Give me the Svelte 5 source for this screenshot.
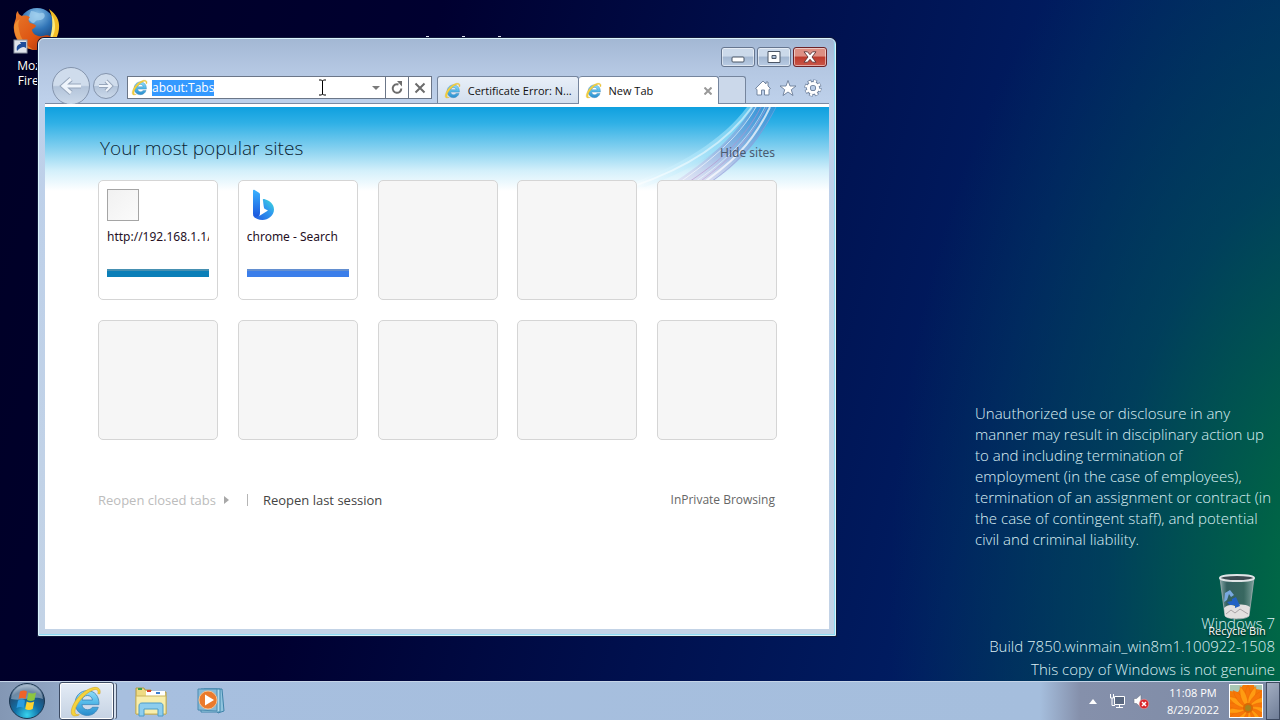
<script lang="ts">
	import { onMount } from 'svelte';

	interface Site {
		title: string;
		icon: 'blank' | 'bing';
		color: string;
	}

	const sites: (Site | null)[] = [
		{ title: 'http://192.168.1.1/', icon: 'blank', color: '#0b7fb8' },
		{ title: 'chrome - Search', icon: 'bing', color: '#3b7eea' },
		null, null, null, null, null, null, null, null,
	];

	const notice = [
		'Unauthorized use or disclosure in any',
		'manner may result in disciplinary action up',
		'to and including termination of',
		'employment (in the case of employees),',
		'termination of an assignment or contract (in',
		'the case of contingent staff), and potential',
		'civil and criminal liability.',
	];

	const petals = new Array(18).fill(0).map((_, i) => i * 20);

	let address = $state('about:Tabs');
	let addressBox: HTMLInputElement;

	onMount(() => {
		addressBox.focus();
		addressBox.select();
	});
</script>

{#snippet ie(size: number)}
	<svg width={size} height={size} viewBox="0 0 32 32" aria-hidden="true">
		<defs>
			<linearGradient id="ieBlue" x1="0" y1="0" x2="0" y2="1">
				<stop offset="0" stop-color="#8fdcf8" />
				<stop offset="0.5" stop-color="#52b8e8" />
				<stop offset="1" stop-color="#2a8ccc" />
			</linearGradient>
		</defs>
		<path
			d="M29 19H12.500C12.800 22 15 24 18 24c2 0 3.700-.8 4.700-2.400h5.700C26.700 26.500 22.800 29.500 17.800 29.500 11 29.500 6 24.500 6 17.500S11 5.500 17.800 5.500C25 5.500 29.500 11 29 19ZM12.600 14.600h10.200c-.5-2.800-2.400-4.400-5-4.400s-4.600 1.600-5.200 4.400Z"
			fill="url(#ieBlue)" stroke="#3a86bb" stroke-width="0.800" />
		<path
			d="M30 8.500C31 4 28.500 1.500 23.500 2.500 16 4 7 12 3.500 20.500 1.300 26 2 30 5.500 30c1.500 0 3-.4 4.500-1.200-3 .4-4.600-.6-4.200-4C6.500 18.500 15.500 8 23 5c3.500-1.400 6-.3 5 3.500Z"
			fill="#f6d33c" stroke="#d2a72c" stroke-width="0.600" />
	</svg>
{/snippet}

<div class="screen">
	<main class="desktop">
		<a class="shortcut firefox" href="#firefox">
			<svg width="48" height="48" viewBox="0 0 48 48" aria-hidden="true">
				<defs>
					<radialGradient id="globe" cx="0.5" cy="0.2" r="0.8">
						<stop offset="0" stop-color="#8cc4ea" />
						<stop offset="0.5" stop-color="#2f73b6" />
						<stop offset="1" stop-color="#10386f" />
					</radialGradient>
					<linearGradient id="fox" x1="0" y1="0" x2="1" y2="1">
						<stop offset="0" stop-color="#e87a2c" />
						<stop offset="0.6" stop-color="#dd5412" />
						<stop offset="1" stop-color="#a8300a" />
					</linearGradient>
				</defs>
				<circle cx="24" cy="20" r="18" fill="url(#globe)" />
				<path d="M18 5c4 0 6 3 10 2s5 4 2 6-6 0-8 3-5-1-7-3Z" fill="#a6d3f0" opacity="0.7" />
				<path d="M36 3c7 5 11 11 10 20-1 11-9 19-19 20 8-5 12-12 13-20 0-8-1-14-4-20Z" fill="#f3bd25" />
				<path d="M39 9c4 7 4 16 0 23l-4 5c4-9 5-18 4-28Z" fill="#fdea7c" />
				<path
					d="M5 5c0 3 2 4 4 5 3-1 6 0 8 1-2 2-2 4 0 6 3 1 5 1 6 3-1 2-4 3-4 4 1 5 6 7 11 6 3-1 6-1 8 1-2 7-8 13-15 13C11 44 2 35 1 24 0 18 3 14 3 11c0-3 0-4 2-6Z"
					fill="url(#fox)" />
				<path d="M1 22c1 12 9 20 20 22-9-5-14-12-15-21-1-4-1-7 1-10-4 2-6 5-6 9Z" fill="#f7a13a" opacity="0.6" />
				<rect x="1" y="34" width="13" height="13" fill="#dfe3ea" stroke="#8b93a0" stroke-width="1" />
				<path d="M4 45c-1-5 1-7 4-7l-1-2h6v6l-2-1c-3 0-4 1-7 4Z" fill="#1f4d9a" />
			</svg>
			<span>Mozilla Firefox</span>
		</a>

		<div class="peek" aria-hidden="true"><i></i><i></i><i></i></div>

		<section class="window" aria-label="New Tab">
			<header class="titlebar">
				<button class="cap" aria-label="Minimize">
					<svg width="16" height="12" viewBox="0 0 16 12"><rect x="2" y="6" width="12" height="5" rx="1" fill="#fff" stroke="#4b5666" /></svg>
				</button>
				<button class="cap" aria-label="Maximize">
					<svg width="14" height="12" viewBox="0 0 14 12"><path d="M1 .5h12v11H1ZM5 4.500v3h4v-3Z" fill="#fff" fill-rule="evenodd" stroke="#4b5666" /></svg>
				</button>
				<button class="cap close" aria-label="Close">
					<svg width="16" height="12" viewBox="0 0 16 12"><path d="M2 .8h3.500L8 3.700 10.500.8H14L10 6l4 5.200h-3.500L8 8.300l-2.500 2.900H2L6 6Z" fill="#fff" stroke="#5c3436" stroke-width="0.900" /></svg>
				</button>
			</header>

			<nav class="toolbar">
				<div class="travel">
					<button class="back" aria-label="Back">
						<svg width="24" height="20" viewBox="0 0 24 20"><path d="M12 3 4 10l8 7M4.500 10H22" fill="none" stroke="#97a6bb" stroke-width="5" /><path d="M12 3 4 10l8 7M4.500 10H22" fill="none" stroke="#eef4fb" stroke-width="3" /></svg>
					</button>
					<button class="forward" aria-label="Forward">
						<svg width="16" height="14" viewBox="0 0 16 14"><path d="m8 2 5 5-5 5M13 7H1" fill="none" stroke="#97a6bb" stroke-width="4" /><path d="m8 2 5 5-5 5M13 7H1" fill="none" stroke="#eef4fb" stroke-width="2" /></svg>
					</button>
				</div>

				<div class="address">
					{@render ie(17)}
					<input type="text" aria-label="Address" spellcheck="false" bind:value={address} bind:this={addressBox} />
					<button class="drop" aria-label="Show address history">
						<svg width="8" height="4" viewBox="0 0 8 4"><path d="M0 0h8L4 4Z" fill="#7a7a7a" /></svg>
					</button>
					<button aria-label="Refresh">
						<svg width="14" height="14" viewBox="0 0 14 14"><path d="M11.300 7.500A4.300 4.300 0 1 1 8.500 3.500" fill="none" stroke="#6c6c6c" stroke-width="2" /><path d="M7 0h5v5.500Z" fill="#6c6c6c" /></svg>
					</button>
					<button aria-label="Stop">
						<svg width="12" height="12" viewBox="0 0 12 12"><path d="m1.500 1.500 9 9m0-9-9 9" stroke="#6c6c6c" stroke-width="2" /></svg>
					</button>
				</div>

				<div class="tabs">
					<button class="tab">{@render ie(17)}<span>Certificate Error: N...</span></button>
					<div class="tab active">
						{@render ie(17)}<span>New Tab</span>
						<button aria-label="Close tab">
							<svg width="8" height="8" viewBox="0 0 8 8"><path d="m.5.5 7 7m0-7-7 7" stroke="#999" stroke-width="2" /></svg>
						</button>
					</div>
					<button class="new-tab" aria-label="New tab"></button>
				</div>

				<div class="tools">
					<button aria-label="Home">
						<svg width="18" height="18" viewBox="0 0 18 18"><path d="M9 2 1.500 9.500 3 10.500V16h4.500v-5h3v5H15v-5.500l1.500-1L14 7V3h-2v2Z" fill="#fff" stroke="#6a7d99" stroke-width="0.900" /></svg>
					</button>
					<button aria-label="Favorites">
						<svg width="18" height="18" viewBox="0 0 18 18"><path d="m9 1.500 2 5.500h6l-4.700 3.700 1.700 5.800L9 13l-5 3.500 1.700-5.800L1 7h6Z" fill="#fff" stroke="#6a7d99" stroke-width="0.900" /></svg>
					</button>
					<button aria-label="Tools">
						<svg width="18" height="18" viewBox="0 0 18 18">
							<circle cx="9" cy="9" r="6.800" fill="none" stroke="#6a7d99" stroke-width="3.600" stroke-dasharray="3.600 1.740" />
							<circle cx="9" cy="9" r="4.600" fill="none" stroke="#6a7d99" stroke-width="4.600" />
							<circle cx="9" cy="9" r="6.800" fill="none" stroke="#fff" stroke-width="2.400" stroke-dasharray="2.400 2.940" stroke-dashoffset="-0.600" />
							<circle cx="9" cy="9" r="4.600" fill="none" stroke="#fff" stroke-width="3" />
						</svg>
					</button>
				</div>
			</nav>

			<div class="page">
				<svg class="swoosh" width="220" height="84" viewBox="0 0 220 84" aria-hidden="true">
					<defs>
						<linearGradient id="ribbon" x1="1" y1="0" x2="0" y2="1">
							<stop offset="0" stop-color="#3f8fd4" stop-opacity="0.7" />
							<stop offset="0.5" stop-color="#9fa9dc" stop-opacity="0.6" />
							<stop offset="1" stop-color="#e9d9f0" stop-opacity="0.4" />
						</linearGradient>
						<linearGradient id="pale" x1="1" y1="0" x2="0" y2="1">
							<stop offset="0" stop-color="#8fdcf8" stop-opacity="0.6" />
							<stop offset="0.5" stop-color="#a9e4fa" stop-opacity="0.7" />
							<stop offset="1" stop-color="#fff" stop-opacity="0.9" />
						</linearGradient>
					</defs>
					<path d="M138 0C114 32 74 58 14 80h22C86 62 126 36 148 0Z" fill="url(#pale)" />
					<path d="M144 0C122 34 94 58 54 82h38C128 60 152 34 166 0Z" fill="url(#ribbon)" />
					<g fill="none" stroke="#fff">
						<path d="M143 0C119 34 81 60 25 79" stroke-width="2" opacity="0.5" />
						<path d="M147 0C129 32 99 56 61 82" opacity="0.600" />
						<path d="M152 0C133 36 107 58 69 82" stroke="#b88fc9" opacity="0.600" />
						<path d="M156 0C139 34 113 58 75 82" opacity="0.500" />
						<path d="M161 0C143 38 121 58 85 82" stroke-width="2" opacity="0.700" />
						<path d="M158 0C135 42 111 60 81 82" stroke="#c59bd0" opacity="0.600" />
						<path d="M167 0C151 32 127 60 91 82" stroke="#8f9fdc" opacity="0.600" />
					</g>
				</svg>

				<div class="heading">
					<h1>Your most popular sites</h1>
					<a href="#hide">Hide sites</a>
				</div>

				<div class="grid">
					{#each sites as site}
						{#if site}
							<a class="tile" href="#site">
								{#if site.icon === 'bing'}
									<svg class="favicon" width="32" height="32" viewBox="0 0 32 32" aria-hidden="true">
										<defs>
											<linearGradient id="bingStem" x1="0" y1="0" x2="0" y2="1">
												<stop offset="0" stop-color="#39b3ff" />
												<stop offset="1" stop-color="#1a53dc" />
											</linearGradient>
											<linearGradient id="bingBowl" x1="0" y1="1" x2="1" y2="0">
												<stop offset="0" stop-color="#2158e0" />
												<stop offset="0.6" stop-color="#2f9bef" />
												<stop offset="1" stop-color="#3fe0d8" />
											</linearGradient>
										</defs>
										<path d="M6 1.500c0-.8 1-1 1.600-.5L12 3.800c.8.6 1 1 1 2V24c0 3-2 5-3.500 5S6 27 6 25Z" fill="url(#bingStem)" />
										<path d="M16 11.500c-.5-1.200 0-1.900 1.200-1.500 5.500 1.500 9.800 5 9.800 10.500 0 6-6 10.500-11.500 10.500C10 31 6 28.500 6 25c1 3 4 3.500 7 1.500l8-5-3-1.500c-1-.5-1.200-1.200-2-8.500Z" fill="url(#bingBowl)" />
									</svg>
								{:else}
									<span class="favicon blank"></span>
								{/if}
								<span class="title">{site.title}</span>
								<span class="bar" style="background-color: {site.color}"></span>
							</a>
						{:else}
							<div class="tile empty"></div>
						{/if}
					{/each}
				</div>

				<footer class="links">
					<button disabled>Reopen closed tabs <svg width="5" height="8" viewBox="0 0 5 8"><path d="M0 0v8l5-4Z" fill="#a8a8a8" /></svg></button>
					<span class="sep"></span>
					<a href="#session">Reopen last session</a>
					<a class="private" href="#inprivate">InPrivate Browsing</a>
				</footer>
			</div>
		</section>

		<svg class="cursor" width="9" height="17" viewBox="0 0 9 17" aria-hidden="true">
			<path d="M1 1h2.500l1 1 1-1H8M4.500 2v13M1 16h2.500l1-1 1 1H8" fill="none" stroke="#000" />
		</svg>

		<p class="notice">
			{#each notice as line}<span>{line}</span>{/each}
		</p>

		<div class="build">
			<span>Windows 7</span>
			<span>Build 7850.winmain_win8m1.100922-1508</span>
			<span>This copy of Windows is not genuine</span>
		</div>

		<a class="shortcut bin" href="#bin">
			<svg width="38" height="48" viewBox="0 0 38 48" aria-hidden="true">
				<defs>
					<linearGradient id="glass" x1="0" y1="0" x2="1" y2="0">
						<stop offset="0" stop-color="#c4ccd2" stop-opacity="0.7" />
						<stop offset="0.2" stop-color="#59656f" stop-opacity="0.6" />
						<stop offset="0.7" stop-color="#5d6e70" stop-opacity="0.6" />
						<stop offset="1" stop-color="#b4bdc2" stop-opacity="0.7" />
					</linearGradient>
				</defs>
				<path d="M2 5 7 43c3 4 21 4 24 0l5-38Z" fill="url(#glass)" stroke="#a4adb3" stroke-width="0.800" />
				<path d="M6 35c3-3 7-4 11-2 4-2 10-2 15 1l-1 9c-3 3-20 4-24 0Z" fill="#e3e0e0" />
				<path d="m8 41 5-4 4 3 5-4 8 5" fill="none" stroke="#a9a3a6" />
				<path d="m7 20 5-3 4 5-3 2-2-3-2 6-3 2Z" fill="#79a9e0" />
				<path d="m14 26 4-2 4 9-5 2v-3h-5l-3-3 5-1Z" fill="#2261c4" />
				<ellipse cx="19" cy="5" rx="17" ry="3" fill="#3c4a50" stroke="#dfe4e6" stroke-width="2" />
			</svg>
			<span>Recycle Bin</span>
		</a>
	</main>

	<footer class="taskbar">
		<button class="start" aria-label="Start">
			<svg width="38" height="38" viewBox="0 0 38 38">
				<defs>
					<radialGradient id="orb" cx="0.5" cy="0.9" r="0.9">
						<stop offset="0" stop-color="#37d3ee" />
						<stop offset="0.4" stop-color="#116fa6" />
						<stop offset="0.75" stop-color="#234a70" />
						<stop offset="1" stop-color="#a5b8cc" />
					</radialGradient>
				</defs>
				<circle cx="19" cy="19" r="17.500" fill="url(#orb)" stroke="#1b3650" />
				<path d="M3 17C4 8 11 3 19 3s15 5 16 14c-10-4-20 3-32 0Z" fill="#dfe9f2" opacity="0.4" />
				<path d="M12 9.500c3-1.500 5-1.400 7 0L17.500 17c-2.500-1.300-4.500-1.300-7 0Z" fill="#ee6329" />
				<path d="M20.500 10.500c2.500 1.300 5 1.300 7.500 0L26.500 18c-2.800 1.300-5 1.200-7.500 0Z" fill="#8cc63f" />
				<path d="M10 18.500c3-1.500 5-1.400 7 0L15.700 26c-2.500-1.300-4.500-1.300-7.200 0Z" fill="#2b9ce0" />
				<path d="M18.700 19.500c2.500 1.300 5 1.300 7.500 0L24.700 27c-2.800 1.300-5 1.200-7.500 0Z" fill="#fdd32f" />
			</svg>
		</button>
		<button class="task running" aria-label="Internet Explorer">{@render ie(33)}</button>
		<button class="task" aria-label="Windows Explorer">
			<svg width="34" height="32" viewBox="0 0 34 32">
				<path d="M2 3h8l1 2h6l1 2h14v22H2Z" fill="#eedb83" stroke="#b39a43" />
				<path d="M12 6h19v5H12Z" fill="#fff" />
				<path d="M4 3h4v2H4Z" fill="#3fa04a" /><path d="M13 5h4v2h-4Z" fill="#d8442c" /><path d="M22 7h4v2h-4Z" fill="#3b7ed0" />
				<path d="M2 11h30v18H2Z" fill="#f8eeac" stroke="#cbb45c" />
				<path d="M5 31V21c0-2 1-3 3-3h18c2 0 3 1 3 3v10h-5v-7H10v7Z" fill="#8dcdee" stroke="#4d9cc9" />
			</svg>
		</button>
		<button class="task" aria-label="Windows Media Player">
			<svg width="32" height="28" viewBox="0 0 32 28">
				<path d="M8 2h18l2 22-6 2Z" fill="#8fc4de" stroke="#3f83a9" />
				<path d="M5 2h19v23H5Z" fill="#b0dbee" stroke="#3f83a9" />
				<path d="M2 2h19v22l-19-1Z" fill="#86b9d6" stroke="#4a8bb0" />
				<circle cx="12" cy="13" r="9" fill="#ea7a2c" stroke="#f7c08d" />
				<path d="M9 7.500v11l9-5.500Z" fill="#fff" />
			</svg>
		</button>

		<div class="tray">
			<button class="more" aria-label="Show hidden icons">
				<svg width="8" height="5" viewBox="0 0 8 5"><path d="M0 5h8L4 0Z" fill="#fff" /></svg>
			</button>
			<button aria-label="Network">
				<svg width="16" height="16" viewBox="0 0 16 16"><path d="M5.500 3.500h10v8h-10Z" fill="#5a6880" stroke="#fff" /><path d="M7 14.500h7M10.500 12v2M1.500 1v4h3V1M3 5v7.500h3" fill="none" stroke="#fff" /></svg>
			</button>
			<button aria-label="Volume muted">
				<svg width="16" height="16" viewBox="0 0 16 16"><path d="M1 5.500h2.500L8 1.500v13l-4.500-4H1Z" fill="#fff" stroke="#6c7688" stroke-width="0.600" /><circle cx="11" cy="11" r="4.800" fill="#d8262c" stroke="#f1b5b5" stroke-width="0.500" /><path d="m9 9 4 4m0-4-4 4" stroke="#fff" stroke-width="1.500" /></svg>
			</button>
			<time class="clock"><span>11:08 PM</span><span>8/29/2022</span></time>
			<button class="avatar" aria-label="User account">
				<svg width="32" height="32" viewBox="0 0 32 32">
					<rect width="32" height="32" fill="#f47a06" />
					<path d="M0 0h13L8 7 0 6ZM24 0h8v5l-7-1Z" fill="#a9c8b4" />
					<g transform="translate(18 23)">
						{#each petals as angle}
							<path d="M0 0C-5-9-3-17 0-23 3-17 4-9 0 0Z" fill={angle % 40 ? '#ff9c12' : '#f77608'} stroke="#e65c00" stroke-width="0.300" transform="rotate({angle})" />
						{/each}
						<circle r="5" fill="#d96a05" /><circle r="3" fill="#a8841c" />
					</g>
				</svg>
			</button>
			<button class="peek-button" aria-label="Show desktop"></button>
		</div>
	</footer>
</div>

<style>
	:global(body) {
		margin: 0;
	}

	.screen {
		display: flex;
		flex-direction: column;
		min-height: 100vh;
		overflow: hidden;
		font-family: 'Open Sans', 'Noto Sans', sans-serif;
		font-size: 12px;
		background:
			radial-gradient(ellipse 480px 820px at 107% 84%, #007c40 0%, rgba(0, 106, 66, 0.85) 24%, rgba(0, 84, 84, 0.55) 55%, rgba(0, 70, 100, 0) 100%),
			linear-gradient(105deg, #000026 0%, #000030 30%, #00104e 55%, #001d62 75%, #003068 100%);
	}

	button {
		display: flex;
		align-items: center;
		justify-content: center;
		padding: 0;
		border: 0;
		background: none;
		font: inherit;
		color: inherit;
	}

	a {
		color: inherit;
		text-decoration: none;
	}

	svg {
		flex: none;
	}

	.desktop {
		position: relative;
		flex: 1;
	}

	.shortcut {
		position: absolute;
		display: flex;
		flex-direction: column;
		align-items: center;
		color: #fff;
		text-align: center;
		text-shadow: 0 1px 2px #000;
	}

	.firefox {
		top: 6px;
		left: 0;
		width: 74px;
		gap: 4px;
		line-height: 15px;
	}

	.firefox span {
		width: 44px;
	}

	.bin {
		right: 6px;
		bottom: 43px;
		width: 74px;
		gap: 2px;
		font-size: 11px;
		line-height: 15px;
	}

	.peek {
		position: absolute;
		top: 36px;
		left: 426px;
		display: flex;
		gap: 33px;
	}

	.peek i {
		width: 3px;
		height: 1px;
		background: #dfe4ee;
	}

	.window {
		position: absolute;
		inset: 38px 444px 45px 38px;
		display: flex;
		flex-direction: column;
		box-sizing: border-box;
		padding: 0 6px 6px;
		border: 1px solid #d9f3fc;
		border-radius: 6px 6px 0 0;
		background: linear-gradient(#a3b8d4 0, #b4c7e2 30px, #bdd0ea 60px, #c3d3e6 100%);
		box-shadow: 0 0 0 1px #10183a, inset -1px -1px 0 #8edcf3;
	}

	.titlebar {
		display: flex;
		justify-content: flex-end;
		gap: 2px;
		padding: 8px 2px 0 0;
	}

	.cap {
		width: 34px;
		height: 20px;
		border: 1px solid #66768f;
		border-radius: 3px;
		background: linear-gradient(#cbd9ea 0 45%, #a3b7d1 50%, #b9cce4);
		box-shadow: inset 0 0 0 1px rgba(255, 255, 255, 0.5);
	}

	.close {
		border-color: #6c2328;
		background: linear-gradient(#dd8f83 0 45%, #be3a2b 50%, #c9574a);
	}

	.toolbar {
		display: flex;
		align-items: flex-start;
		height: 36px;
		border-bottom: 1px solid #7a8aa3;
	}

	.travel {
		display: flex;
		align-items: center;
		gap: 3px;
		width: 82px;
		padding-left: 7px;
		box-sizing: border-box;
	}

	.travel button {
		flex: none;
		box-sizing: border-box;
		border: 1px solid #8595ad;
		border-radius: 50%;
		background: linear-gradient(#cfdcec 0 48%, #b3c4da 52%, #cbd9ea);
	}

	.back {
		width: 38px;
		height: 38px;
	}

	.forward {
		width: 26px;
		height: 26px;
	}

	.address {
		display: flex;
		align-items: center;
		flex: 300;
		min-width: 0;
		height: 23px;
		margin-top: 9px;
		padding-left: 3px;
		box-sizing: border-box;
		border: 1px solid #6b7688;
		background: #fff;
	}

	.address input {
		flex: 1;
		min-width: 0;
		height: 16px;
		margin-left: 4px;
		padding: 0;
		border: 0;
		outline: 0;
		font: inherit;
		line-height: 16px;
	}

	.address input::selection {
		background: #3399ff;
		color: #fff;
	}

	.address button {
		align-self: stretch;
		width: 23px;
		border-left: 1px solid #6b7688;
		box-sizing: border-box;
	}

	.address .drop {
		width: 19px;
		border: 0;
	}

	.tabs {
		display: flex;
		flex: 309;
		min-width: 0;
		height: 28px;
		margin: 9px 0 0 5px;
	}

	.tab {
		display: flex;
		align-items: center;
		flex: 1;
		gap: 7px;
		height: 27px;
		min-width: 0;
		padding: 0 6px;
		box-sizing: border-box;
		border: 1px solid #75859d;
		border-bottom: 0;
		border-radius: 3px 3px 0 0;
		background: linear-gradient(#e8eff8, #d3dfee);
		font-size: 11px;
		white-space: nowrap;
		color: #111;
	}

	.tab span {
		flex: 1;
		text-align: left;
	}

	.tab.active {
		height: 28px;
		border-left: 0;
		background: #fff;
	}

	.new-tab {
		width: 27px;
		height: 27px;
		box-sizing: border-box;
		border: 1px solid #75859d;
		border-width: 1px 1px 0 0;
		border-radius: 0 3px 0 0;
		background: #cbd8ea;
	}

	.tools {
		display: flex;
		gap: 7px;
		padding: 12px 7px 0 8px;
	}

	.page {
		position: relative;
		flex: 1;
		padding: 0 52px 0 53px;
		border-top: 3px solid #fff;
		background: linear-gradient(#0fa0df 0, #2fb0e6 16px, #86d1f0 42px, #d4f0fb 64px, #fff 84px);
		font-family: 'Noto Sans', 'Open Sans', sans-serif;
		color: #444;
	}

	.swoosh {
		position: absolute;
		top: 0;
		right: 0;
	}

	.heading {
		position: relative;
		display: flex;
		align-items: center;
		justify-content: space-between;
		padding: 28px 2px 18px 2px;
	}

	h1 {
		margin: 0;
		font-family: 'Open Sans', 'Noto Sans', sans-serif;
		font-size: 19px;
		line-height: 27px;
		font-weight: 350;
		color: #0b1f33;
	}

	.heading a {
		padding-top: 9px;
		line-height: 18px;
		color: #4a5a70;
	}

	.grid {
		position: relative;
		display: grid;
		grid-template-columns: repeat(5, 120px);
		justify-content: space-between;
		gap: 20px 0;
	}

	.tile {
		display: flex;
		flex-direction: column;
		height: 120px;
		padding: 8px;
		box-sizing: border-box;
		border: 1px solid #d5d5d5;
		border-radius: 5px;
		background: #fff;
		color: #26101f;
	}

	.tile.empty {
		background: #f6f6f6;
	}

	.favicon {
		width: 32px;
		height: 32px;
		box-sizing: border-box;
	}

	.blank {
		border: 1px solid #a5a5a5;
		background: linear-gradient(135deg, #f1f1f1, #fbfbfb);
	}

	.title {
		margin: 6px 0 22px;
		overflow: hidden;
		line-height: 20px;
		white-space: nowrap;
	}

	.bar {
		height: 8px;
		box-sizing: border-box;
		border-top: 2px solid rgba(160, 170, 170, 0.4);
	}

	.links {
		display: flex;
		align-items: center;
		margin-top: 50px;
		padding-right: 2px;
		font-family: 'Open Sans', 'Noto Sans', sans-serif;
		font-size: 13px;
		line-height: 20px;
	}

	.links button {
		gap: 8px;
		color: #bcbcbc;
	}

	.sep {
		width: 1px;
		height: 12px;
		margin: 0 15px 0 18px;
		background: #b5b5b5;
	}

	.private {
		margin-left: auto;
		font-size: 12px;
		color: #666;
	}

	.cursor {
		position: absolute;
		top: 79px;
		left: 318px;
	}

	.notice,
	.build {
		position: absolute;
		margin: 0;
		font-size: 15px;
		font-weight: 350;
		color: #dcf0f4;
		white-space: nowrap;
	}

	.notice {
		right: 0;
		bottom: 131px;
		width: 305px;
		line-height: 21px;
	}

	.notice span,
	.build span {
		display: block;
	}

	.build {
		right: 5px;
		bottom: 0;
		line-height: 23px;
		text-align: right;
	}

	.taskbar {
		display: flex;
		align-items: center;
		height: 39px;
		box-sizing: border-box;
		border-top: 1px solid #c6d5e8;
		background: linear-gradient(90deg, #8397b4 0, #8ea3c1 50px, #a7bfdf 120px, #a5bedd calc(100% - 240px), #8590ab calc(100% - 200px), #7d8ba6 100%);
	}

	.start {
		width: 54px;
	}

	.task {
		width: 61px;
		height: 38px;
	}

	.running {
		width: 55px;
		margin: 0 6px 0 5px;
		padding-right: 3px;
		box-sizing: border-box;
		border: 1px solid #3c4a62;
		border-radius: 3px;
		background: linear-gradient(#e4ecf6, #c5d2e3);
		box-shadow: inset 0 0 0 1px #fff, 3px 0 0 -1px #d5dfed, 4px 0 0 -1px #4b5a73;
	}

	.tray {
		display: flex;
		align-items: center;
		gap: 8px;
		height: 100%;
		margin-left: auto;
		color: #fff;
	}

	.more {
		margin-right: 4px;
	}

	.clock {
		display: flex;
		flex-direction: column;
		margin: 0 2px 0 10px;
		font-size: 11px;
		line-height: 17px;
		text-align: center;
	}

	.tray .avatar {
		border: 1px solid #fff;
	}

	.peek-button {
		align-self: stretch;
		width: 14px;
		margin-left: -5px;
		border: 1px solid #3d4960;
		background: linear-gradient(135deg, #a3aec2, #6f7d97);
	}
</style>
